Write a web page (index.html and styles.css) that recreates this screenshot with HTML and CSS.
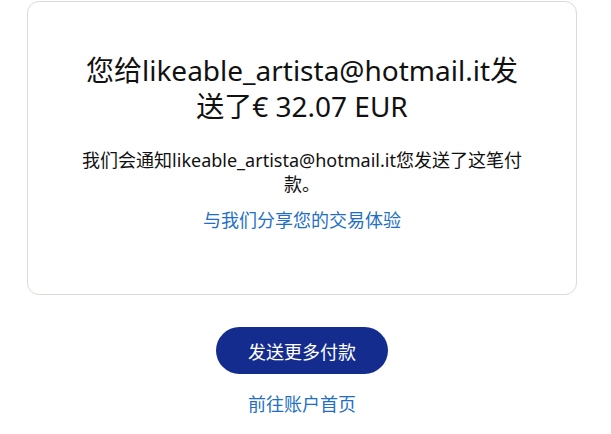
FILE: index.html
```html
<!DOCTYPE html>
<html lang="zh-CN">
  <head>
    <meta charset="UTF-8" />
    <meta name="viewport" content="width=device-width, initial-scale=1.0" />
    <title>付款已发送</title>
    <link rel="stylesheet" href="styles.css">
  </head>
  <body>
    <main class="page">
      <section class="card">
        <h1 class="title">您给likeable_artista@hotmail.it发送了€ 32.07 EUR</h1>
        <p class="note">我们会通知likeable_artista@hotmail.it您发送了这笔付款。</p>
        <a class="link" href="#">与我们分享您的交易体验</a>
      </section>
      <div class="actions">
        <button type="button" class="btn">发送更多付款</button>
        <a class="link" href="#">前往账户首页</a>
      </div>
    </main>
  </body>
</html>
```
FILE: styles.css
```css
body {
  margin: 0;
  background: #fff;
  font-family: "Noto Sans", "Noto Sans CJK SC", sans-serif;
  color: #111;
}

.page {
  width: 550px;
  margin: 1px 0 0 27px;
}

.card {
  display: flex;
  flex-direction: column;
  align-items: center;
  padding: 50px 50px 62px;
  border: 1px solid #dcdad6;
  border-radius: 12px;
  text-align: center;
}

.title {
  margin: 0;
  font-size: 28px;
  font-weight: 400;
  line-height: 36px;
}

.note {
  margin: 24px 0 12px;
  font-size: 18px;
  line-height: 24px;
}

.link {
  color: #1f6fc6;
  font-size: 18px;
  line-height: 24px;
  text-decoration: none;
}

.actions {
  display: flex;
  flex-direction: column;
  align-items: center;
  gap: 18px;
  margin-top: 32px;
}

.btn {
  width: 172px;
  height: 47px;
  border: 0;
  border-radius: 24px;
  background: #142c8e;
  color: #fff;
  font-family: inherit;
  font-size: 18px;
}
```
